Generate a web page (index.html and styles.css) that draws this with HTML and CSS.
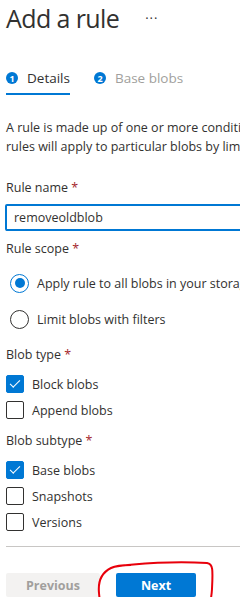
FILE: index.html
```html
<!DOCTYPE html>
<html lang="en">
<head>
    <meta charset="UTF-8">
    <meta name="viewport" content="width=device-width, initial-scale=1.0">
    <title>Add a rule</title>
    <link rel="stylesheet" href="styles.css">
</head>
<body>
    <div class="panel">
        <div class="header">
            <h1>Add a rule</h1>
            <span class="more">&middot;&middot;&middot;</span>
        </div>

        <div class="tabs">
            <div class="tab active"><span class="step">1</span>Details</div>
            <div class="tab"><span class="step">2</span>Base blobs</div>
        </div>

        <p class="intro">A rule is made up of one or more conditions and actions that apply to the entire storage account.<br>rules will apply to particular blobs by limiting with filters.</p>

        <div class="field">
            <label class="label">Rule name <span class="req">*</span></label>
            <input class="text-input" type="text" value="removeoldblob">
        </div>

        <div class="field">
            <div class="label">Rule scope <span class="req">*</span></div>
            <div class="radios">
                <div class="radio checked"><span class="dot"></span>Apply rule to all blobs in your storage account</div>
                <div class="radio"><span class="dot"></span>Limit blobs with filters</div>
            </div>
        </div>

        <div class="field">
            <div class="label">Blob type <span class="req">*</span></div>
            <div class="check checked"><span class="box"></span>Block blobs</div>
            <div class="check"><span class="box"></span>Append blobs</div>
        </div>

        <div class="field">
            <div class="label">Blob subtype <span class="req">*</span></div>
            <div class="check checked"><span class="box"></span>Base blobs</div>
            <div class="check"><span class="box"></span>Snapshots</div>
            <div class="check"><span class="box"></span>Versions</div>
        </div>

        <div class="footer">
            <button class="btn btn-prev">Previous</button>
            <button class="btn btn-next">Next</button>
            <svg class="scribble" width="120" height="56" viewBox="0 0 120 56">
                <path d="M16 8 C40 4 80 2 110 4 C116 5 116 10 115 30 C114 46 112 50 100 50 C70 51 40 52 14 51 C4 51 3 46 2 34 C1 24 4 14 14 9 C20 6 28 6 34 6" fill="none" stroke="#e8000b" stroke-width="2"/>
            </svg>
        </div>
    </div>
</body>
</html>
```

FILE: styles.css
```css
body {
    margin: 0;
    font-family: 'Open Sans', 'Noto Sans', sans-serif;
    color: #323130;
    background: white;
    overflow: hidden;
}
.panel {
    width: 420px;
    padding: 0 0 0 6px;
}
.header {
    display: flex;
    align-items: center;
    height: 36px;
}
h1 {
    font-size: 25px;
    font-weight: 400;
    margin: 0;
    letter-spacing: -0.6px;
}
.more {
    margin-left: 26px;
    font-size: 13px;
    letter-spacing: 1px;
}
.tabs {
    display: flex;
    margin-top: 33px;
    gap: 24px;
}
.tab {
    display: flex;
    align-items: center;
    font-size: 13.5px;
    color: #a19f9d;
    padding-bottom: 6px;
    border-bottom: 2px solid transparent;
}
.tab.active {
    color: #323130;
    border-bottom-color: #0078d4;
}
.step {
    width: 12px;
    height: 12px;
    border-radius: 50%;
    background: #0078d4;
    color: white;
    font-size: 9px;
    font-weight: 700;
    display: flex;
    align-items: center;
    justify-content: center;
    margin-right: 9px;
}
.intro {
    font-size: 12.5px;
    line-height: 19px;
    margin: 23px 0 23px;
    white-space: nowrap;
}
.field {
    margin-top: 9px;
}
.intro + .field {
    margin-top: 0;
}
.label {
    display: block;
    font-size: 12.5px;
    line-height: 17px;
    margin-bottom: 8px;
}
.req {
    color: #a4262c;
}
.text-input {
    width: 400px;
    height: 23px;
    border: 2px solid #0078d4;
    border-radius: 2px;
    padding: 0 7px;
    font-family: inherit;
    font-size: 12.5px;
    color: #323130;
    outline: none;
    margin-left: -1px;
}
.radios {
    margin-top: 2px;
}
.radio {
    display: flex;
    align-items: center;
    font-size: 12.5px;
    height: 36px;
    padding-left: 4px;
    white-space: nowrap;
}
.radio .dot {
    width: 19px;
    height: 19px;
    border: 1px solid #323130;
    border-radius: 50%;
    margin-right: 8px;
    box-sizing: border-box;
    display: flex;
    align-items: center;
    justify-content: center;
}
.radio.checked .dot {
    border-color: #0078d4;
}
.radio.checked .dot::after {
    content: "";
    width: 10px;
    height: 10px;
    border-radius: 50%;
    background: #0078d4;
}
.check {
    display: flex;
    align-items: center;
    font-size: 12.5px;
    height: 26px;
}
.check .box {
    width: 18px;
    height: 18px;
    border: 1px solid #323130;
    border-radius: 2px;
    box-sizing: border-box;
    margin-right: 8px;
    display: flex;
    align-items: center;
    justify-content: center;
}
.check.checked .box {
    background: #0078d4;
    border-color: #0078d4;
}
.check.checked .box::after {
    content: "";
    width: 9px;
    height: 4px;
    border-left: 1.5px solid white;
    border-bottom: 1.5px solid white;
    transform: rotate(-45deg);
    margin-top: -3px;
}
.footer {
    position: relative;
    margin-top: 11px;
    border-top: 1px solid #c8c6c4;
    padding-top: 26px;
    display: flex;
    gap: 16px;
}
.btn {
    height: 24px;
    border: none;
    border-radius: 2px;
    font-family: inherit;
    font-size: 12.5px;
    font-weight: 700;
}
.btn-prev {
    width: 94px;
    background: #f3f2f1;
    color: #a19f9d;
}
.btn-next {
    width: 80px;
    background: #0078d4;
    color: white;
}
.scribble {
    position: absolute;
    left: 91px;
    top: 12px;
}
```
